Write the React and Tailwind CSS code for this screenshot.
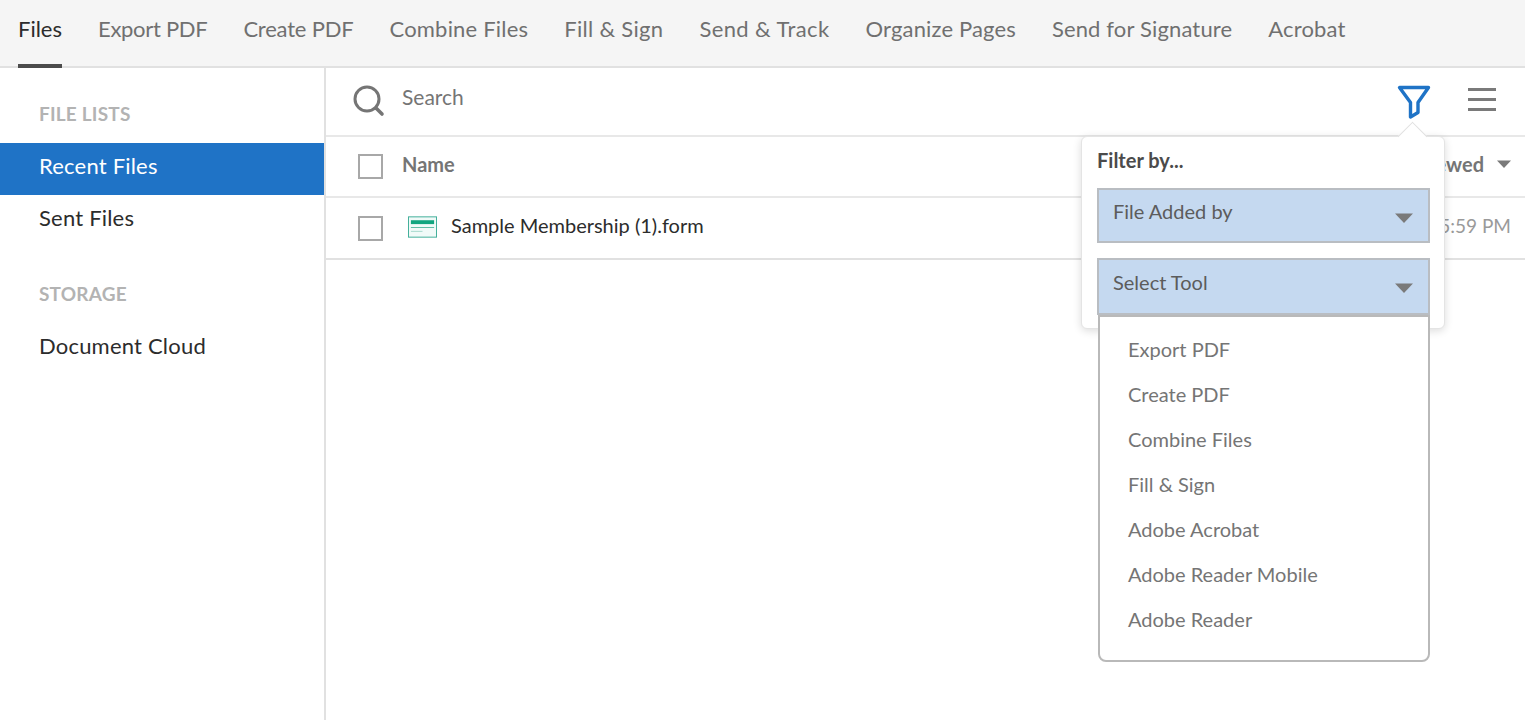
const tabs = [
  { label: 'Files', tracking: 'tracking-[0px]' },
  { label: 'Export PDF', tracking: 'tracking-[-0.3px]' },
  { label: 'Create PDF', tracking: 'tracking-[-0.2px]' },
  { label: 'Combine Files', tracking: 'tracking-[0.2px]' },
  { label: 'Fill & Sign', tracking: 'tracking-[0.3px]' },
  { label: 'Send & Track', tracking: 'tracking-[0.4px]' },
  { label: 'Organize Pages', tracking: 'tracking-[0.15px]' },
  { label: 'Send for Signature', tracking: 'tracking-[0.15px]' },
  { label: 'Acrobat', tracking: 'tracking-[0.15px]' },
];
const tools = ['Export PDF', 'Create PDF', 'Combine Files', 'Fill & Sign', 'Adobe Acrobat', 'Adobe Reader Mobile', 'Adobe Reader'];

function Checkbox() {
  return <div className="w-[25px] h-[25px] border-2 border-[#a8a8a8] bg-white shrink-0" />;
}

function Caret({ className }) {
  return (
    <svg width="18" height="10" viewBox="0 0 18 10" className={className}>
      <path d="M0 0.5h18L9 10z" fill="#7a7a7a" />
    </svg>
  );
}

function FormIcon() {
  return (
    <svg width="29" height="22" viewBox="0 0 30 22" className="shrink-0">
      <rect x="0.5" y="0.5" width="29" height="21" fill="#f1faf8" stroke="#3fae98" />
      <rect x="3" y="4" width="24" height="4" fill="#12a57f" />
      <rect x="3" y="11" width="24" height="1" fill="#5cbba4" />
      <rect x="3" y="15" width="12" height="1" fill="#a5d9cc" />
    </svg>
  );
}

function FilterSelect({ label, className, labelClass }) {
  return (
    <div className={`flex justify-between pl-[14px] pr-[15px] bg-[#c5d9f0] border-2 border-[#b9bdc2] text-[#5c5c5c] text-[20px] ${className}`}>
      <span className={`leading-[30px] ${labelClass}`}>{label}</span>
      <Caret className="mt-[23px]" />
    </div>
  );
}

export default function App() {
  return (
    <div className="h-[720px] overflow-hidden bg-white font-['Lato',sans-serif]">
      <nav className="flex gap-[36px] h-[68px] pl-[18px] bg-[#f5f5f5] border-b-2 border-[#e1e1e1] text-[22px]">
        {tabs.map((tab, i) => (
          <div
            key={tab.label}
            className={`h-[68px] pt-[12px] leading-[34px] border-b-4 ${tab.tracking} ${i === 0 ? 'border-[#4b4b4b] text-[#2c2c2c]' : 'border-transparent text-[#707070]'}`}
          >
            {tab.label}
          </div>
        ))}
      </nav>

      <div className="flex h-[652px]">
        <aside className="w-[326px] shrink-0 border-r-2 border-[#e1e1e1] pt-[32px] text-[22px] tracking-[0.2px] text-[#2c2c2c]">
          <div className="pl-[39px] h-[43px] text-[19px] font-bold leading-[28px] text-[#b3b3b3]">FILE LISTS</div>
          <div className="pl-[39px] h-[52px] leading-[46px] bg-[#1f73c6] text-white">Recent Files</div>
          <div className="pl-[39px] h-[52px] leading-[46px]">Sent Files</div>
          <div className="pl-[39px] mt-[33px] h-[43px] text-[19px] font-bold leading-[28px] text-[#b3b3b3]">STORAGE</div>
          <div className="pl-[39px] h-[52px] leading-[46px]">Document Cloud</div>
        </aside>

        <main className="relative flex-1 min-w-0">
          <div className="flex items-center h-[69px] border-b-2 border-[#e8e8e8] pl-[26px] pr-[29px]">
            <svg width="34" height="34" viewBox="0 0 34 34" fill="none" stroke="#757575" strokeWidth="3" strokeLinecap="round" className="shrink-0">
              <circle cx="15" cy="14" r="12" />
              <path d="M24 23l6 6" strokeWidth="3.6" />
            </svg>
            <span className="ml-[16px] mb-[10px] text-[21px] text-[#757575]">Search</span>
            <svg width="34" height="36" viewBox="0 0 34 36" fill="none" stroke="#1f73c6" strokeWidth="3.4" strokeLinejoin="round" className="ml-auto mr-[37px] shrink-0 mt-[1px]">
              <path d="M2.5 3.5h29L21 18.5v10L13.5 33V18.5z" />
            </svg>
            <div className="flex flex-col gap-[7px] w-[28px] mb-[4px]">
              <div className="h-[3px] bg-[#7a7a7a]" />
              <div className="h-[3px] bg-[#7a7a7a]" />
              <div className="h-[3px] bg-[#7a7a7a]" />
            </div>
          </div>

          <div className="flex items-center h-[61px] border-b-2 border-[#e8e8e8] pl-[32px] pr-[14px]">
            <Checkbox />
            <span className="ml-[19px] mb-[6px] text-[20px] font-bold text-[#757575]">Name</span>
            <span className="ml-auto mb-[6px] text-[20px] font-bold text-[#757575]">Last Viewed</span>
            <Caret className="ml-[13px] mb-[5px] w-[14px]" />
          </div>

          <div className="flex items-center h-[62px] border-b-2 border-[#e1e1e1] pl-[32px] pr-[14px]">
            <Checkbox />
            <div className="ml-[25px] mb-[2px]"><FormIcon /></div>
            <span className="ml-[14px] mb-[6px] text-[20px] text-[#2c2c2c]">Sample Membership (1).form</span>
            <span className="ml-auto mb-[4px] text-[19px] text-[#9a9a9a]">Today, 5:59 PM</span>
          </div>

          {/* filter popover */}
          <div className="absolute left-[755px] top-[68px] w-[364px] h-[193px] bg-white rounded-[6px] border border-[#e4e4e4] shadow-[0_2px_8px_rgba(0,0,0,0.14)] pt-[9px] pl-[15px] pr-[14px]">
            <div className="absolute left-[320px] top-[-11px] w-[21px] h-[21px] rotate-45 bg-white border-l border-t border-[#e0e0e0]" />
            <div className="relative text-[20px] font-bold leading-[28px] text-[#4b4b4b]">Filter by...</div>
            <FilterSelect label="File Added by" className="mt-[14px] h-[55px]" labelClass="mt-[6px]" />
            <FilterSelect label="Select Tool" className="mt-[15px] h-[57px]" labelClass="mt-[7px]" />
          </div>

          <div className="absolute left-[772px] top-[247px] w-[332px] h-[347px] bg-white border-2 border-[#b9b9b9] rounded-b-[8px] pl-[28px] pt-[11px] text-[20px] text-[#757575]">
            {tools.map((tool) => (
              <div key={tool} className="h-[45px] leading-[42px]">{tool}</div>
            ))}
          </div>
        </main>
      </div>
    </div>
  );
}
